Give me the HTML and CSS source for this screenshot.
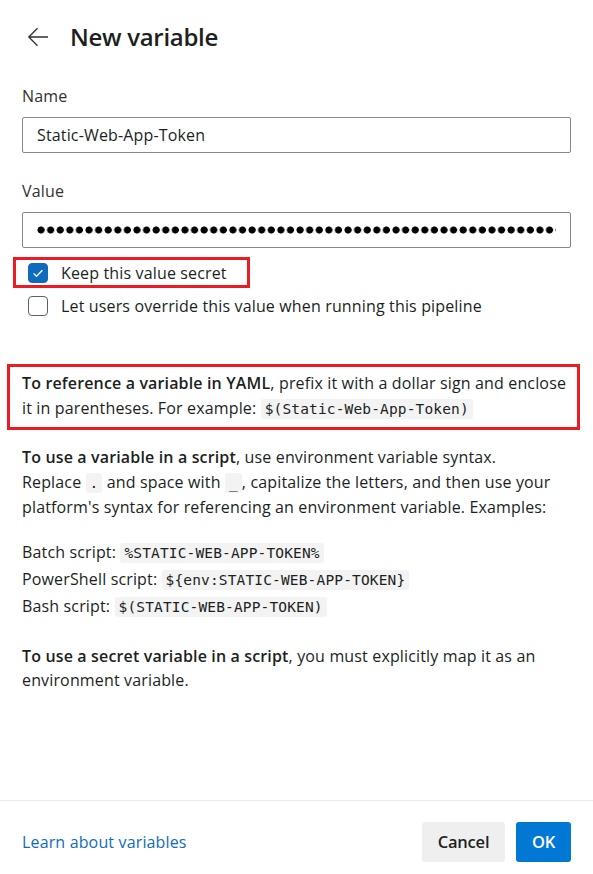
FILE: index.html
```html
<!DOCTYPE html>
<html lang="en">
<head>
<meta charset="utf-8">
<title>New variable</title>
<link rel="stylesheet" href="styles.css">
</head>
<body>
<div class="panel">
  <header class="header">
    <button class="back" aria-label="Back">
      <svg width="22" height="22" viewBox="0 0 22 22"><path d="M21 11H1.8M10.5 2.3L1.8 11l8.7 8.7" fill="none" stroke="#323130" stroke-width="1.3"/></svg>
    </button>
    <h1 class="title">New variable</h1>
  </header>

  <main class="content">
    <label class="label">Name</label>
    <div class="input"><span class="input-text">Static-Web-App-Token</span></div>

    <label class="label label-value">Value</label>
    <div class="input"><span class="dots"></span></div>

    <div class="check-wrap">
      <div class="check-row highlight-small">
        <span class="box checked">
          <svg width="20" height="20" viewBox="0 0 20 20"><path d="M5.6 10.4l2.9 2.9 5.9-6" fill="none" stroke="#fff" stroke-width="1.3"/></svg>
        </span>
        <span class="check-label">Keep this value secret</span>
      </div>
      <div class="check-row">
        <span class="box"></span>
        <span class="check-label">Let users override this value when running this pipeline</span>
      </div>
    </div>

    <p class="para highlight-big"><strong>To reference a variable in YAML</strong>, prefix it with a dollar sign and enclose it in parentheses. For example: <code>$(Static-Web-App-Token)</code></p>

    <p class="para para-script"><strong>To use a variable in a script</strong>, use environment variable syntax.<br>Replace <code>.</code> and space with <code>_</code>, capitalize the letters, and then use your platform's syntax for referencing an environment variable. Examples:</p>

    <div class="examples">
      <div>Batch script: <code>%STATIC-WEB-APP-TOKEN%</code></div>
      <div>PowerShell script: <code>${env:STATIC-WEB-APP-TOKEN}</code></div>
      <div>Bash script: <code>$(STATIC-WEB-APP-TOKEN)</code></div>
    </div>

    <p class="para para-secret"><strong>To use a secret variable in a script</strong>, you must explicitly map it as an environment variable.</p>
  </main>

  <footer class="footer">
    <a class="link" href="#">Learn about variables</a>
    <div class="buttons">
      <button class="btn btn-cancel">Cancel</button>
      <button class="btn btn-ok">OK</button>
    </div>
  </footer>
</div>
</body>
</html>
```

FILE: styles.css
```css
* { box-sizing: border-box; }

html, body {
  margin: 0;
  padding: 0;
  background: #fff;
}

body {
  font-family: "Open Sans", "Noto Sans", sans-serif;
  font-size: 16px;
  letter-spacing: 0.15px;
  color: #201f1e;
}

.panel {
  width: 593px;
  height: 874px;
  display: flex;
  flex-direction: column;
  overflow: hidden;
}

.header {
  display: flex;
  align-items: center;
  padding: 20px 22px 0 27px;
  height: 54px;
}

.back {
  width: 22px;
  height: 22px;
  padding: 0;
  margin: 0 21px 0 0;
  border: 0;
  background: none;
  display: flex;
}

.title {
  margin: 0;
  font-size: 24px;
  font-weight: 600;
  letter-spacing: -0.3px;
  line-height: 32px;
  color: #201f1e;
}

.content {
  flex: 1;
  padding: 31px 22px 0 22px;
  display: flex;
  flex-direction: column;
  align-items: stretch;
}

.label {
  display: block;
  line-height: 22px;
  color: #323130;
  margin-bottom: 10px;
}

.label-value {
  margin-top: 27px;
}

.input {
  height: 36px;
  border: 1px solid #8a8886;
  border-radius: 2px;
  padding: 0 14px;
  display: flex;
  align-items: center;
  overflow: hidden;
}

.input-text {
  color: #201f1e;
}

.dots {
  display: block;
  width: 519px;
  height: 8px;
  background-image: radial-gradient(circle at 4px 4px, #000 3.2px, transparent 3.9px);
  background-size: 9.6px 8px;
  background-repeat: repeat-x;
}

.check-wrap {
  display: flex;
  flex-direction: column;
  align-items: flex-start;
  margin-top: 9px;
}

.check-row {
  display: flex;
  align-items: center;
  height: 24px;
  padding-left: 6px;
  gap: 13px;
}

.highlight-small {
  border: 3px solid #ec1c24;
  height: 31px;
  margin-left: -9px;
  padding: 0 20px 0 12px;
  margin-bottom: 6px;
}

.box {
  width: 20px;
  height: 20px;
  border: 1px solid #616161;
  border-radius: 4px;
  display: flex;
  flex: none;
}

.box.checked {
  background: #0f6cbd;
  border-color: #0f6cbd;
}

.box.checked svg {
  margin: -1px;
}

.check-label {
  color: #201f1e;
}

.para {
  margin: 0;
  line-height: 24.5px;
}

.para-script {
  margin-top: 15px;
}

.para-secret {
  margin-top: 24px;
}

.highlight-big {
  margin-top: 46px;
  border: 3px solid #ec1c24;
  margin-left: -15px;
  margin-right: -9px;
  padding: 4px 6px 6px 12px;
}

.examples {
  margin-top: 19px;
  line-height: 26px;
}

code {
  font-family: "DejaVu Sans Mono", "Liberation Mono", monospace;
  font-size: 14.5px;
  letter-spacing: 0.15px;
  background: #f3f3f3;
  border-radius: 3px;
  padding: 2px 4px;
  color: #201f1e;
}

strong {
  font-weight: 600;
}

.footer {
  height: 74px;
  border-top: 1px solid #eaeaea;
  display: flex;
  align-items: center;
  justify-content: space-between;
  padding: 8px 22px 0 22px;
}

.link {
  color: #0f6cbd;
  text-decoration: none;
}

.buttons {
  display: flex;
  gap: 11px;
}

.btn {
  height: 40px;
  border: 0;
  border-radius: 3px;
  font-family: inherit;
  font-size: 16.5px;
  font-weight: 600;
  letter-spacing: -0.2px;
  padding: 0;
}

.btn-cancel {
  width: 83px;
  background: #efefef;
  color: #201f1e;
}

.btn-ok {
  width: 55px;
  background: #0078d4;
  color: #fff;
}
```
